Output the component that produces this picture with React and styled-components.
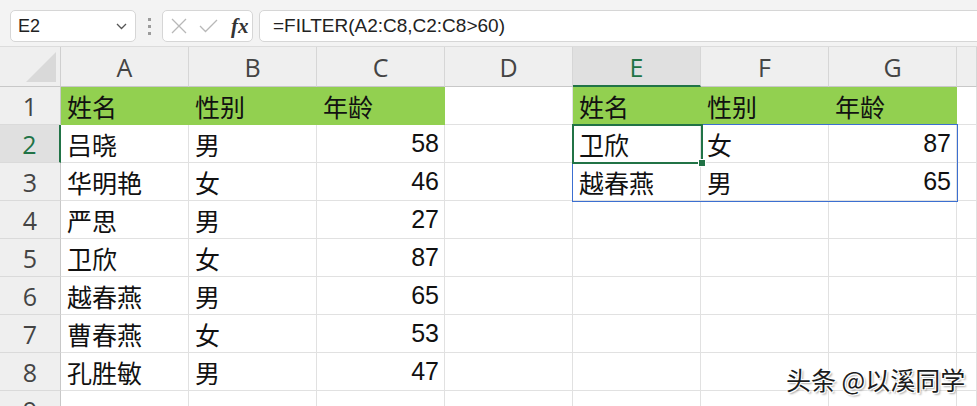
import React from 'react';
import styled, { createGlobalStyle } from 'styled-components';

const GlobalStyle = createGlobalStyle`
  html, body { margin: 0; padding: 0; background: #fff; overflow: hidden; }
  body { width: 977px; height: 406px; font-family: "Liberation Sans", "Noto Sans CJK SC", sans-serif; }
`;

const GREEN_FILL = '#92d050';
const SEL = '#217346';

const Page = styled.div`
  width: 977px;
  height: 406px;
  overflow: hidden;
  display: flex;
  flex-direction: column;
`;

const Toolbar = styled.div`
  height: 47px;
  flex: none;
  box-sizing: border-box;
  background: #f3f3f3;
  display: flex;
  align-items: flex-start;
  padding: 10px 0 0 10px;
  border-bottom: 1px solid #dcdcdc;
  overflow: hidden;
`;

const Box = styled.div`
  height: 32px;
  box-sizing: border-box;
  background: #fff;
  border: 1px solid #d6d6d6;
  border-radius: 5px;
  display: flex;
  align-items: center;
  flex: none;
`;

const NameBox = styled(Box)`
  width: 126px;
  padding: 0 8px 0 7px;
  justify-content: space-between;
  font-size: 18px;
  color: #222;
`;

const Dots = styled.div`
  width: 26px;
  height: 32px;
  flex: none;
  display: flex;
  flex-direction: column;
  align-items: center;
  justify-content: center;
  gap: 4px;
`;

const Dot = styled.span`
  width: 3px;
  height: 3px;
  background: #9c9c9c;
`;

const FxBox = styled(Box)`
  width: 91px;
  padding-left: 8px;
  gap: 12px;
`;

const FxLabel = styled.span`
  font-family: "Liberation Serif", "DejaVu Serif", serif;
  font-style: italic;
  font-weight: 700;
  font-size: 21px;
  color: #333;
  line-height: 1;
  margin-left: 1px;
`;

const FormulaBox = styled(Box)`
  flex: 1;
  margin-left: 6px;
  margin-right: -12px;
  padding-left: 13px;
  font-size: 19px;
  color: #222;
`;

const Sheet = styled.div`
  position: relative;
  flex: 1;
  min-height: 0;
  overflow: hidden;
  display: grid;
  grid-template-columns: 61px repeat(7, 128px) 1fr;
  grid-template-rows: 40px repeat(9, 38px);
`;

const Corner = styled.div`
  box-sizing: border-box;
  background: #efefef;
  border-right: 1px solid #cfcfcf;
  border-bottom: 1px solid #c8c8c8;
  display: flex;
  align-items: flex-end;
  justify-content: flex-end;
  padding: 0 4px 4px 0;
`;

const ColHeader = styled.div`
  box-sizing: border-box;
  background: ${p => (p.$active ? '#e0e0e0' : '#efefef')};
  border-right: 1px solid #d6d6d6;
  border-bottom: ${p => (p.$active ? `2px solid ${SEL}` : '1px solid #c8c8c8')};
  display: flex;
  align-items: center;
  justify-content: center;
  font-family: "Open Sans", "Noto Sans", sans-serif;
  font-size: 25px;
  color: ${p => (p.$active ? SEL : '#444')};
  padding-top: ${p => (p.$active ? '1px' : '0')};
`;

const RowHeader = styled.div`
  box-sizing: border-box;
  background: ${p => (p.$active ? '#e0e0e0' : '#efefef')};
  border-right: ${p => (p.$active ? `2px solid ${SEL}` : '1px solid #c8c8c8')};
  border-bottom: 1px solid #dadada;
  display: flex;
  align-items: center;
  justify-content: center;
  font-family: "Open Sans", "Noto Sans", sans-serif;
  font-size: 25px;
  color: ${p => (p.$active ? SEL : '#444')};
`;

const Cell = styled.div`
  box-sizing: border-box;
  background: ${p => p.$fill || '#fff'};
  border-right: 1px solid ${p => p.$fill || '#e1e1e1'};
  border-bottom: 1px solid ${p => p.$fill || '#e1e1e1'};
  display: flex;
  align-items: center;
  justify-content: ${p => (p.$num ? 'flex-end' : 'flex-start')};
  padding: 0 5px 0 6px;
  font-family: "Liberation Sans", "Noto Sans CJK SC", sans-serif;
  font-size: 25px;
  color: #111;
  white-space: nowrap;
  overflow: hidden;
`;

const SpillRange = styled.div`
  position: absolute;
  left: 572px;
  top: 77px;
  width: 386px;
  height: 78px;
  box-sizing: border-box;
  border: 1px solid #3c6fd1;
  pointer-events: none;
`;

const Selection = styled.div`
  position: absolute;
  left: 572px;
  top: 77px;
  width: 131px;
  height: 40px;
  box-sizing: border-box;
  border: 2px solid ${SEL};
  pointer-events: none;
`;

const FillHandle = styled.span`
  position: absolute;
  right: -5px;
  bottom: -5px;
  width: 8px;
  height: 8px;
  box-sizing: border-box;
  background: ${SEL};
  border: 1px solid #fff;
`;

const Watermark = styled.div`
  position: absolute;
  left: 786px;
  top: 317px;
  font-family: "Noto Sans CJK SC", sans-serif;
  font-size: 25px;
  line-height: 30px;
  color: #1c1c1c;
  white-space: nowrap;
  text-shadow: 1px 1px 0 #fff, -1px -1px 0 #fff, 1px -1px 0 #fff, -1px 1px 0 #fff,
    2px 2px 2px rgba(0, 0, 0, 0.35);
`;

const COLS = ['A', 'B', 'C', 'D', 'E', 'F', 'G', 'H'];

const data = [
  [['姓名', 'h'], ['性别', 'h'], ['年龄', 'h'], [''], ['姓名', 'h'], ['性别', 'h'], ['年龄', 'h'], ['']],
  [['吕晓'], ['男'], [58], [''], ['卫欣'], ['女'], [87], ['']],
  [['华明艳'], ['女'], [46], [''], ['越春燕'], ['男'], [65], ['']],
  [['严思'], ['男'], [27], [''], [''], [''], [''], ['']],
  [['卫欣'], ['女'], [87], [''], [''], [''], [''], ['']],
  [['越春燕'], ['男'], [65], [''], [''], [''], [''], ['']],
  [['曹春燕'], ['女'], [53], [''], [''], [''], [''], ['']],
  [['孔胜敏'], ['男'], [47], [''], [''], [''], [''], ['']],
  [[''], [''], [''], [''], [''], [''], [''], ['']],
];

function Chevron() {
  return (
    <svg width="11" height="7" viewBox="0 0 11 7">
      <path d="M1 1 L5.5 5.5 L10 1" fill="none" stroke="#555" strokeWidth="1.3" />
    </svg>
  );
}

function CancelIcon() {
  return (
    <svg width="16" height="16" viewBox="0 0 16 16">
      <path d="M1 1 L15 15 M15 1 L1 15" stroke="#b8b8b8" strokeWidth="1.3" fill="none" />
    </svg>
  );
}

function CheckIcon() {
  return (
    <svg width="19" height="14" viewBox="0 0 19 14">
      <path d="M1 7 L6.5 12.5 L18 1" stroke="#b8b8b8" strokeWidth="1.3" fill="none" />
    </svg>
  );
}

function CornerTriangle() {
  return (
    <svg width="30" height="30" viewBox="0 0 30 30">
      <polygon points="0,30 30,30 30,0" fill="#d9d9d9" />
    </svg>
  );
}

export default function App() {
  return (
    <Page>
      <GlobalStyle />
      <Toolbar>
        <NameBox>
          <span>E2</span>
          <Chevron />
        </NameBox>
        <Dots>
          <Dot />
          <Dot />
          <Dot />
        </Dots>
        <FxBox>
          <CancelIcon />
          <CheckIcon />
          <FxLabel>fx</FxLabel>
        </FxBox>
        <FormulaBox>=FILTER(A2:C8,C2:C8&gt;60)</FormulaBox>
      </Toolbar>
      <Sheet>
        <Corner>
          <CornerTriangle />
        </Corner>
        {COLS.map(c => (
          <ColHeader key={c} $active={c === 'E'}>
            {c === 'H' ? '' : c}
          </ColHeader>
        ))}
        {data.map((row, r) => (
          <React.Fragment key={r}>
            <RowHeader $active={r === 1}>{r + 1}</RowHeader>
            {row.map(([v, kind], c) => (
              <Cell
                key={c}
                $fill={kind === 'h' ? GREEN_FILL : undefined}
                $num={typeof v === 'number'}
              >
                {v}
              </Cell>
            ))}
          </React.Fragment>
        ))}
        <SpillRange />
        <Selection>
          <FillHandle />
        </Selection>
        <Watermark>头条 @以溪同学</Watermark>
      </Sheet>
    </Page>
  );
}
